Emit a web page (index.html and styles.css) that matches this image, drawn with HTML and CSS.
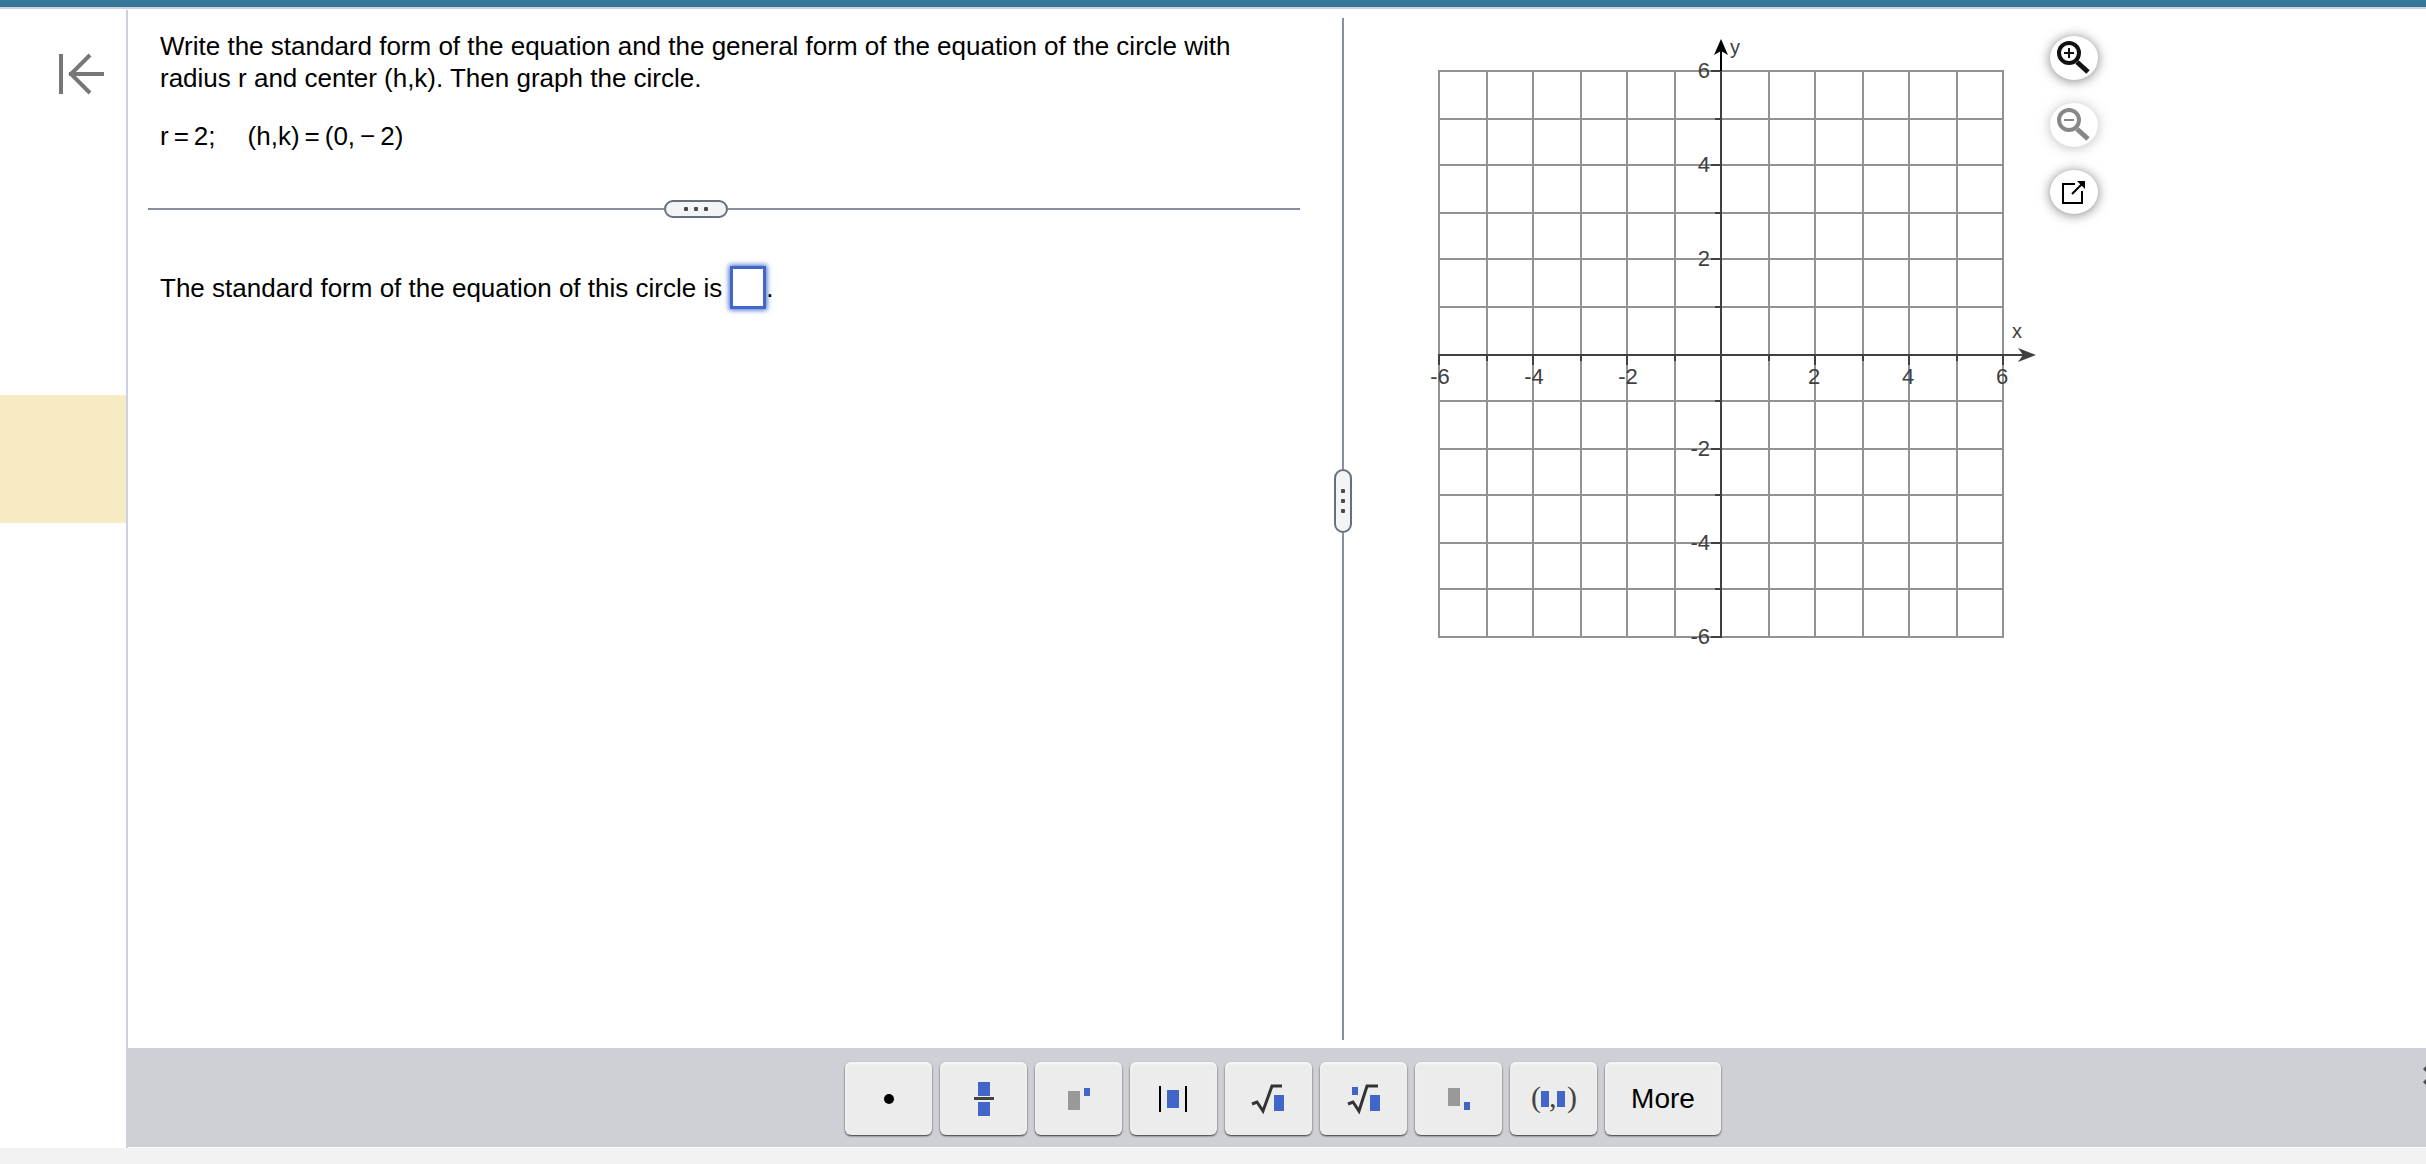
FILE: index.html
```html
<!DOCTYPE html>
<html lang="en">
<head>
<meta charset="utf-8">
<title>Circle equations</title>
<link rel="stylesheet" href="styles.css">
</head>
<body>
<header class="topbar"></header>
<div class="app">
  <aside class="sidebar">
    <button class="collapse" type="button" aria-label="Collapse panel">
      <svg width="48" height="44" viewBox="0 0 48 44" fill="none" stroke="#757876" stroke-width="4"><path d="M4 2v40M12 22h35M33 3 14 22l19 19"/></svg>
    </button>
    <div class="current"></div>
  </aside>
  <main class="workspace">
    <div class="panes">
      <section class="question">
        <div class="prompt">
          <p>Write the standard form of the equation and the general form of the equation of the circle with radius r and center (h,k). Then graph the circle.</p>
          <p class="given"><span>r<span class="op">=</span>2;</span><span>(h,k)<span class="op">=</span>(0,<span class="op">−</span>2)</span></p>
        </div>
        <div class="split">
          <span class="split-start"></span>
          <button class="handle" type="button" aria-label="Resize question"><i></i><i></i><i></i></button>
          <span class="split-end"></span>
        </div>
        <div class="answer">
          <label for="answer">The standard form of the equation of this circle is</label>
          <input class="blank" id="answer" type="text"><span>.</span>
        </div>
      </section>
      <div class="divider">
        <span class="line-top"></span>
        <button class="handle handle-v" type="button" aria-label="Resize panes"><i></i><i></i><i></i></button>
        <span class="line-bottom"></span>
      </div>
      <section class="graph">
        <svg class="plot" width="630" height="630" viewBox="0 0 630 630" role="img" aria-label="Coordinate grid">
          <path class="grid" d="M27 50V618M75 50V618M121 50V618M169 50V618M215 50V618M263 50V618M357 50V618M403 50V618M451 50V618M497 50V618M545 50V618M591 50V618M27 51H591M27 99H591M27 145H591M27 193H591M27 239H591M27 287H591M27 381H591M27 429H591M27 475H591M27 523H591M27 569H591M27 617H591"/>
          <path class="axis" d="M26 335H612M309 51V618M27 335v10M75 335v6M121 335v10M169 335v6M215 335v10M263 335v6M357 335v6M403 335v10M451 335v6M497 335v10M545 335v6M591 335v10M309 51h-10M309 99h-6M309 145h-10M309 193h-6M309 239h-10M309 287h-6M309 381h-6M309 429h-10M309 475h-6M309 523h-10M309 569h-6M309 617h-10"/>
          <path class="axis-head" d="M309 51V28"/>
          <path fill="#000" d="M309 19 316 35 309 31 302 35Z"/>
          <path fill="#404040" d="M624 335 606 342 611 335 606 328Z"/>
          <g class="ticks ticks-x">
            <text x="28" y="364">-6</text><text x="122" y="364">-4</text><text x="216" y="364">-2</text>
            <text x="402" y="364">2</text><text x="496" y="364">4</text><text x="590" y="364">6</text>
          </g>
          <g class="ticks ticks-y">
            <text x="298" y="58">6</text><text x="298" y="152">4</text><text x="298" y="246">2</text>
            <text x="298" y="436">-2</text><text x="298" y="530">-4</text><text x="298" y="624">-6</text>
          </g>
          <g class="names"><text x="318" y="34">y</text><text x="600" y="318">x</text></g>
        </svg>
        <div class="tools">
          <button class="tool" type="button" aria-label="Zoom in">
            <svg width="48" height="44" viewBox="0 0 48 44" fill="none" stroke="#111"><circle cx="19" cy="17" r="10" stroke-width="4"/><path stroke-width="5" d="m27 26 11 10"/><path stroke-width="2" d="M19 12v10M14 17h10"/></svg>
          </button>
          <button class="tool" type="button" aria-label="Zoom out" disabled>
            <svg width="48" height="44" viewBox="0 0 48 44" fill="none" stroke="#111"><circle cx="19" cy="17" r="10" stroke-width="4"/><path stroke-width="5" d="m27 26 11 10"/><path stroke-width="2" d="M14 17h10"/></svg>
          </button>
          <button class="tool" type="button" aria-label="Open in new window">
            <svg width="48" height="44" viewBox="0 0 48 44" fill="none" stroke="#000" stroke-width="2"><path d="M25 14H13v19h19V21M22 24 32 14"/><path fill="#000" stroke="none" d="M27 11h8v8Z"/></svg>
          </button>
        </div>
      </section>
    </div>
    <div class="palette">
      <button class="key" type="button" aria-label="Dot"><svg viewBox="0 0 87 73"><circle cx="44" cy="37" r="5"/></svg></button>
      <button class="key" type="button" aria-label="Fraction"><svg viewBox="0 0 87 73"><path class="slot" d="M38 20h12v14H38zM38 40h12v14H38z"/><path fill="#444" d="M34 35h20v3H34z"/></svg></button>
      <button class="key" type="button" aria-label="Exponent"><svg viewBox="0 0 87 73"><path class="base" d="M33 29h12v19H33z"/><path class="slot" d="M49 26h6v8h-6z"/></svg></button>
      <button class="key" type="button" aria-label="Absolute value"><svg viewBox="0 0 87 73"><path d="M29 24h2v26h-2zM55 24h2v26h-2z"/><path class="slot" d="M37 28h12v18H37z"/></svg></button>
      <button class="key" type="button" aria-label="Square root"><svg viewBox="0 0 87 73"><path class="radical" d="m27 42 5-2 6 9 9-25h10"/><path class="slot" d="M49 33h10v16H49z"/></svg></button>
      <button class="key" type="button" aria-label="Nth root"><svg viewBox="0 0 87 73"><path class="radical" d="m28 42 5-2 6 9 8-25h11"/><path class="slot" d="M50 33h10v16H50zM32 25h6v8h-6z"/></svg></button>
      <button class="key" type="button" aria-label="Subscript"><svg viewBox="0 0 87 73"><path class="base" d="M33 26h12v18H33z"/><path class="slot" d="M49 40h6v8h-6z"/></svg></button>
      <button class="key" type="button" aria-label="Ordered pair"><svg viewBox="0 0 87 73"><g class="pair"><text x="21" y="45">(</text><text x="39" y="45">,</text><text x="57" y="45">)</text></g><path class="slot" d="M31 29h8v16h-8zM47 29h8v16h-8z"/></svg></button>
      <button class="key key-more" type="button">More</button>
      <button class="overflow" type="button" aria-label="Palette options"><svg width="4" height="24" viewBox="0 0 4 24"><path d="m1 5 4-4v8zM1 18l4-4v8z"/></svg></button>
    </div>
  </main>
</div>
<footer class="footer"></footer>
</body>
</html>
```
FILE: styles.css
```css
* { box-sizing: border-box; }

body {
  margin: 0;
  min-height: 100vh;
  display: flex;
  flex-direction: column;
  background: #fff;
  color: #000;
  font-family: "Liberation Sans", Arial, sans-serif;
  font-size: 26px;
  line-height: 32px;
}

button {
  padding: 0;
  border: 0;
  background: none;
  color: inherit;
  font: inherit;
}

svg { display: block; }
p { margin: 0; }

.topbar {
  height: 9px;
  background: #347796;
  border-bottom: 2px solid #cdd3de;
}

.app {
  flex: 1;
  display: flex;
  margin-top: 1px;
}

.sidebar {
  width: 128px;
  flex: none;
  display: flex;
  flex-direction: column;
  border-right: 2px solid #cdd0de;
}

.collapse { margin: 42px 0 0 57px; align-self: flex-start; }

.current {
  height: 128px;
  margin-top: 299px;
  background: #f7ebc3;
}

.workspace {
  flex: 1;
  min-width: 0;
  display: flex;
  flex-direction: column;
}

.panes {
  flex: 1;
  display: grid;
  grid-template-columns: 1206fr 18px 1074fr;
  padding: 8px 0;
}

.question { padding: 2px 34px 0 20px; }
.prompt { padding: 10px 12px 0; }

.given {
  display: flex;
  gap: 32px;
  margin-top: 26px;
}

.op { margin: 0 5px; }

.split {
  display: flex;
  align-items: center;
  margin-top: 48px;
}

.split-start, .split-end {
  height: 2px;
  background: #8790a0;
}

.split-start { flex: 516; }
.split-end { flex: 572; }

.handle {
  width: 64px;
  height: 18px;
  display: flex;
  align-items: center;
  justify-content: center;
  gap: 6px;
  border: 2px solid #657080;
  border-radius: 9px;
  background: #f3f4f6;
}

.handle i {
  width: 4px;
  height: 4px;
  border-radius: 1px;
  background: #4a4a4a;
}

.handle-v {
  width: 18px;
  height: 64px;
  flex-direction: column;
}

.answer {
  display: flex;
  align-items: center;
  margin-top: 48px;
  padding-left: 12px;
}

.blank {
  width: 36px;
  height: 43px;
  margin: 0 0 0 8px;
  border: 3px solid #4067c9;
  box-shadow: 0 0 5px 1px #4067c9;
  font: inherit;
  outline: 0;
}

.divider {
  display: flex;
  flex-direction: column;
  align-items: center;
}

.line-top, .line-bottom {
  width: 2px;
  background: #8790a0;
}

.line-top { flex: 451; }
.line-bottom { flex: 507; }

.graph {
  display: flex;
  align-items: flex-start;
  gap: 8px;
  padding: 2px 0 0 60px;
}

.plot { flex: none; }
.grid { fill: none; stroke: #929292; stroke-width: 2; }
.axis { fill: none; stroke: #404040; stroke-width: 2; }
.axis-head { stroke: #000; stroke-width: 2; }
.ticks { fill: #404040; font-size: 22px; }
.ticks-x { text-anchor: middle; }
.ticks-y { text-anchor: end; }
.names { fill: #404040; font-size: 20px; }

.tools {
  display: flex;
  flex-direction: column;
  gap: 23px;
  padding-top: 16px;
}

.tool {
  width: 48px;
  height: 44px;
  border-radius: 50%;
  background: #fff;
  box-shadow: 0 1px 12px rgba(0, 0, 0, .5);
}

.tool:disabled { opacity: .5; }

.palette {
  display: flex;
  justify-content: center;
  gap: 8px;
  position: relative;
  height: 99px;
  margin-bottom: 1px;
  padding: 12px 0 0 12px;
  border-top: 2px solid #cad0dc;
  background: #cfd0d6;
}

.key {
  width: 87px;
  height: 73px;
  border-radius: 6px;
  background: #ececec;
  box-shadow: inset 0 2px 2px #f8f8f8, 0 1px 2px #333;
}

.key svg { width: 87px; height: 73px; }
.key-more { width: 116px; font-size: 28px; }

.slot { fill: #4166c8; }
.base { fill: #999; }
.radical { fill: none; stroke: #333; stroke-width: 3; }
.pair { fill: #444; font-family: "Liberation Serif", serif; font-size: 30px; }

.overflow {
  position: absolute;
  top: 14px;
  right: 0;
}

.overflow svg { fill: #4a4a4a; }

.footer {
  height: 16px;
  background: #f2f2f2;
}
```
